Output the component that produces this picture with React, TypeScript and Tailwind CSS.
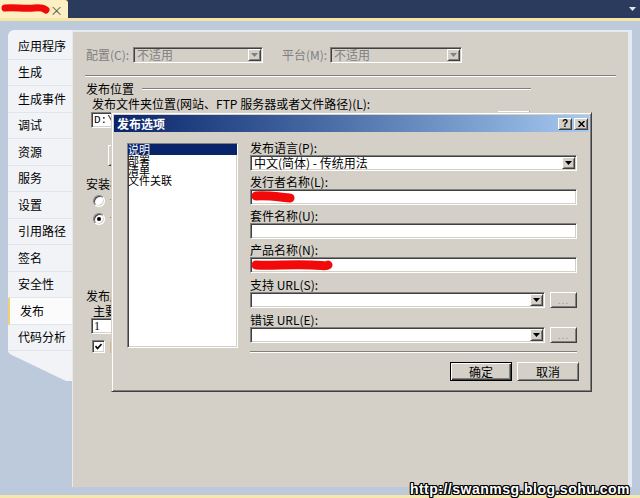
import React from 'react';

const sunken =
  'border border-t-[#808080] border-l-[#808080] border-b-white border-r-white shadow-[inset_1px_1px_0_#404040,inset_-1px_-1px_0_#d4d0c8]';
const raised =
  'border border-t-white border-l-white border-b-[#404040] border-r-[#404040] shadow-[inset_1px_1px_0_#d4d0c8,inset_-1px_-1px_0_#808080]';

const navItems = ['应用程序', '生成', '生成事件', '调试', '资源', '服务', '设置', '引用路径', '签名', '安全性', '发布', '代码分析'];

const Arrow = ({ color = '#000' }: { color?: string }) => (
  <svg width="7" height="4" viewBox="0 0 7 4">
    <polygon points="0,0 7,0 3.5,4" fill={color} />
  </svg>
);

const Scribble = ({ d, w, h, sw = 8 }: { d: string; w: number; h: number; sw?: number }) => (
  <svg className="absolute left-0 top-0 overflow-visible" width={w} height={h} viewBox={`0 0 ${w} ${h}`}>
    <path d={d} stroke="#f20a0a" strokeWidth={sw} strokeLinecap="round" strokeLinejoin="round" fill="none" />
  </svg>
);

const Combo = ({ text, disabled, className }: { text: string; disabled?: boolean; className: string }) => (
  <div
    className={`${sunken} ${className} h-[16px] flex items-center p-[1px] ${disabled ? 'bg-[#d4d0c8] text-[#808080]' : 'bg-white text-black'}`}
  >
    <span className="flex-1 pl-[2px] leading-[14px] whitespace-nowrap">{text}</span>
    <div className={`${raised} w-[13px] h-[12px] bg-[#d4d0c8] flex items-center justify-center`}>
      <Arrow color={disabled ? '#808080' : '#000'} />
    </div>
  </div>
);

const Label = ({ text, tall }: { text: string; tall?: boolean }) => (
  <div className={`${tall ? 'h-[19px]' : 'h-[18px]'} flex items-end leading-[14px] whitespace-nowrap`}>{text}</div>
);

const Etched = ({ className }: { className: string }) => (
  <div className={`h-[2px] border-t border-t-[#808080] border-b border-b-white ${className}`} />
);

export default function App() {
  return (
    <div className="relative w-[640px] h-[498px] overflow-hidden bg-[#bccadb] flex flex-col text-[12px] text-black font-['Noto_Sans_CJK_SC','Noto_Sans',sans-serif]">
      {/* document tab strip */}
      <div className="h-[18px] bg-[#2a3b5d] flex">
        <div className="relative w-[68px] bg-[#fcf0c2] rounded-tr-[3px] flex items-center justify-end pr-[5px]">
          <Scribble w={52} h={16} sw={7} d="M5 8 C 14 7, 24 9, 34 8 S 44 9, 46 10" />
          <span className="text-[#555] text-[13px] leading-none">×</span>
        </div>
        <div className="flex-1" />
        <div className="w-[16px] flex items-center justify-center">
          <Arrow color="#dfe6f0" />
        </div>
      </div>
      <div className="h-[3px] bg-[#f6e5a6]" />

      {/* property pages */}
      <div className="flex-1 flex pt-[9px] pl-[8px] pr-[8px] pb-[8px]">
        <div className="w-[64px] flex flex-col">
          <div className="bg-[#f1f3f7] rounded-tl-[6px] pt-[3px]">
            {navItems.map((item) => (
              <div
                key={item}
                className={`h-[26.5px] flex items-center pl-[10px] border-b border-[#e1e5ec] whitespace-nowrap ${
                  item === '发布' ? 'bg-[#fbfbfc] border-l-2 border-l-[#f0cf78] pl-[8px]' : ''
                }`}
              >
                {item}
              </div>
            ))}
          </div>
          <svg width="64" height="30" viewBox="0 0 64 30">
            <path d="M0 0 H64 V30 H58 L8 6 Q 0 3 0 0 Z" fill="#f1f3f7" />
          </svg>
        </div>

        <div className="flex-1 bg-[#d4d0c8] border-t-2 border-l border-r-4 border-[#e6ebf2] pl-[13px] pr-[12px] flex flex-col">
          <div className="mt-[15px] h-[16px] flex items-center">
            <span className="w-[47px] text-[#808080] whitespace-nowrap">配置(C):</span>
            <Combo text="不适用" disabled className="w-[130px]" />
            <span className="ml-[19px] w-[48px] text-[#808080] whitespace-nowrap">平台(M):</span>
            <Combo text="不适用" disabled className="w-[132px]" />
          </div>
          <Etched className="mt-[12px] -ml-[1px]" />

          <div className="mt-[4px] h-[16px] flex items-center">
            <span className="whitespace-nowrap">发布位置</span>
            <Etched className="ml-[8px] mr-[85px] flex-1" />
          </div>
          <div className="pl-[6px] h-[14px] leading-[14px] whitespace-nowrap">发布文件夹位置(网站、FTP 服务器或者文件路径)(L):</div>
          <div className="mt-[1px] ml-[5px] flex items-start">
            <div className={`${sunken} bg-white w-[404px] h-[16px] pl-[2px] leading-[14px] font-['Liberation_Mono',monospace] text-[11px]`}>D:\</div>
            <div className={`${raised} ml-[3px] -mt-[1px] w-[32px] h-[18px] bg-[#d4d0c8]`} />
          </div>
          <div className={`${raised} mt-[16px] ml-[22px] w-[80px] h-[21px] bg-[#d4d0c8]`} />

          <div className="mt-[11px] h-[14px] leading-[14px] whitespace-nowrap">安装模式和设置</div>
          <div className="mt-[3px] ml-[7px] h-[13px] flex items-center gap-[5px]">
            <div className={`${sunken} bg-white w-[12px] h-[12px] rounded-full`} />
            <span className="whitespace-nowrap">设置</span>
          </div>
          <div className="mt-[5px] ml-[7px] h-[13px] flex items-center gap-[5px]">
            <div className={`${sunken} bg-white w-[12px] h-[12px] rounded-full flex items-center justify-center`}>
              <div className="w-[4px] h-[4px] rounded-full bg-black" />
            </div>
            <span className="whitespace-nowrap">设置</span>
          </div>

          <div className="mt-[64px] h-[14px] leading-[14px] whitespace-nowrap">发布版本</div>
          <div className="mt-[1px] pl-[7px] h-[14px] leading-[14px] whitespace-nowrap">主要(A):</div>
          <div className={`${sunken} bg-white ml-[5px] w-[60px] h-[16px] pl-[2px] leading-[14px] font-['Liberation_Serif',serif]`}>1</div>
          <div className="mt-[6px] ml-[6px] h-[13px] flex items-center gap-[5px]">
            <div className={`${sunken} bg-white w-[13px] h-[13px] flex items-center justify-center`}>
              <svg width="7" height="7" viewBox="0 0 7 7">
                <path d="M0.5 3 L2.5 5.5 L6.5 1" stroke="#000" strokeWidth="1.6" fill="none" />
              </svg>
            </div>
            <span className="whitespace-nowrap">附加</span>
          </div>
        </div>
      </div>
      <div className="h-[3px] bg-[#f6e7ad]" />

      {/* 发布选项 dialog */}
      <div className="absolute left-[111px] top-[112px] w-[481px] h-[280px] bg-[#d4d0c8] border border-t-[#d4d0c8] border-l-[#d4d0c8] border-r-[#404040] border-b-[#404040] shadow-[inset_1px_1px_0_#fff,inset_-1px_-1px_0_#808080] p-[2px] flex flex-col">
        <div className="h-[17px] bg-linear-to-r from-[#0a246a] to-[#a6caf0] flex items-center pl-[3px] pr-[1px]">
          <span className="flex-1 text-white font-bold">发布选项</span>
          <div className="flex gap-[2px]">
            <div className={`${raised} w-[14px] h-[12px] bg-[#d4d0c8] flex items-center justify-center text-[10px] font-bold leading-none font-['Liberation_Sans',sans-serif]`}>
              ?
            </div>
            <div className={`${raised} w-[14px] h-[12px] bg-[#d4d0c8] flex items-center justify-center`}>
              <svg width="7" height="6" viewBox="0 0 7 6">
                <path d="M0.5 0 L6.5 6 M6.5 0 L0.5 6" stroke="#000" strokeWidth="1.5" />
              </svg>
            </div>
          </div>
        </div>

        <div className="flex pl-[13px] items-start">
          <div className={`${sunken} bg-white mt-[11px] w-[111px] h-[205px] flex flex-col text-[11px]`}>
            <div className="h-[11px] leading-[11px] bg-[#0a246a] text-white">说明</div>
            <div className="h-[10px] leading-[10px]">部署</div>
            <div className="h-[10px] leading-[10px]">清单</div>
            <div className="h-[10px] leading-[10px]">文件关联</div>
          </div>

          <div className="ml-[12px] mt-[5px] w-[327px] flex flex-col">
            <Label text="发布语言(P):" />
            <Combo text="中文(简体) - 传统用法" className="w-full" />

            <Label text="发行者名称(L):" />
            <div className={`${sunken} relative bg-white h-[16px]`}>
              <Scribble w={48} h={14} sw={9} d="M5 6 C 15 5, 28 7, 39 8" />
            </div>

            <Label text="套件名称(U):" />
            <div className={`${sunken} relative bg-white h-[16px]`} />

            <Label text="产品名称(N):" />
            <div className={`${sunken} relative bg-white h-[16px]`}>
              <Scribble w={84} h={14} sw={9} d="M5 7 C 20 8, 40 6, 60 7 S 73 8, 77 7" />
            </div>

            <Label text="支持 URL(S):" tall />
            <div className="flex">
              <Combo text="" className="w-[295px]" />
              <div className={`${raised} ml-[5px] w-[27px] h-[16px] bg-[#d4d0c8] flex items-center justify-center text-[#9a968e] text-[10px] leading-none tracking-[1px]`}>
                ...
              </div>
            </div>

            <Label text="错误 URL(E):" tall />
            <div className="flex">
              <Combo text="" className="w-[295px]" />
              <div className={`${raised} ml-[5px] w-[27px] h-[16px] bg-[#d4d0c8] flex items-center justify-center text-[#9a968e] text-[10px] leading-none tracking-[1px]`}>
                ...
              </div>
            </div>

            <Etched className="mt-[8px]" />

            <div className="mt-[9px] -mr-[2px] flex justify-end gap-[5px]">
              <div className="w-[62px] h-[19px] bg-[#d4d0c8] border border-black shadow-[inset_1px_1px_0_#fff,inset_-1px_-1px_0_#404040,inset_-2px_-2px_0_#808080] flex items-center justify-center">
                确定
              </div>
              <div className={`${raised} w-[62px] h-[19px] bg-[#d4d0c8] flex items-center justify-center`}>取消</div>
            </div>
          </div>
        </div>
      </div>

      <div className="absolute right-[10px] bottom-[1px] text-white font-bold text-[14px] leading-[16px] tracking-[0.5px] font-['Liberation_Sans',sans-serif] [text-shadow:1px_0_#000,-1px_0_#000,0_1px_#000,0_-1px_#000,1px_1px_#000,-1px_-1px_#000,1px_-1px_#000,-1px_1px_#000]">
        http://swanmsg.blog.sohu.com
      </div>
    </div>
  );
}
